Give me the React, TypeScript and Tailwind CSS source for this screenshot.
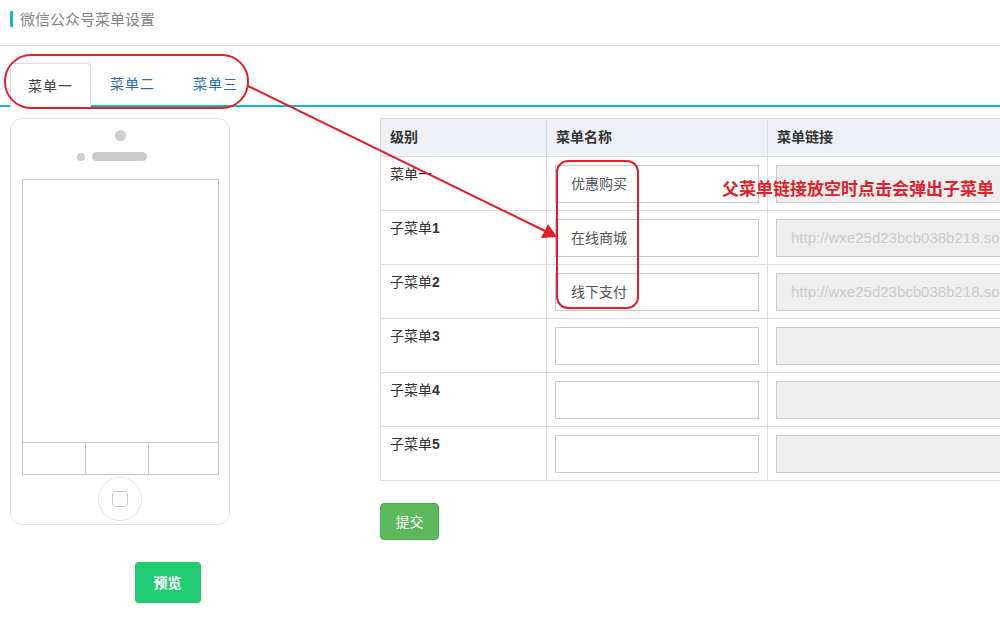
import React from "react";

const font = { fontFamily: '"Noto Sans CJK SC", "Liberation Sans", sans-serif' };

function Label({ text, num }: { text: string; num?: string }) {
  return (
    <span className="text-[14px] text-[#333]">
      {text}
      {num && <b className="font-bold" style={{ fontFamily: '"Liberation Sans", sans-serif' }}>{num}</b>}
    </span>
  );
}

const rows: { label: string; num?: string; name: string; link: string }[] = [
  { label: "菜单一", name: "优惠购买", link: "" },
  { label: "子菜单", num: "1", name: "在线商城", link: "http://wxe25d23bcb038b218.sohu" },
  { label: "子菜单", num: "2", name: "线下支付", link: "http://wxe25d23bcb038b218.sohu" },
  { label: "子菜单", num: "3", name: "", link: "" },
  { label: "子菜单", num: "4", name: "", link: "" },
  { label: "子菜单", num: "5", name: "", link: "" },
];

export default function App() {
  return (
    <div className="relative w-[1000px] h-[640px] overflow-hidden bg-white" style={font}>
      {/* header */}
      <div className="h-[46px] border-b border-[#e5e5e5] flex items-start pt-[10px] pl-[10px]">
        <div className="w-[3px] h-[16px] mt-[1px] bg-[#1ab3c4] mr-[7px]" />
        <span className="text-[15px] leading-[18px] text-[#888]">微信公众号菜单设置</span>
      </div>

      {/* tabs */}
      <div className="mt-[16px] flex items-end pl-[10px] border-b-2 border-[#17b6c6] h-[45px]">
        <div className="w-[81px] h-[44px] -mb-[2px] border border-[#ddd] border-b-0 rounded-t-[4px] bg-white flex items-center justify-center text-[14px] text-[#444] tracking-[1px]">
          菜单一
        </div>
        <div className="w-[83px] h-[44px] flex items-center justify-center text-[14px] text-[#2a6fb0] tracking-[1px]">
          菜单二
        </div>
        <div className="w-[83px] h-[44px] flex items-center justify-center text-[14px] text-[#2a6fb0] tracking-[1px]">
          菜单三
        </div>
      </div>

      {/* content */}
      <div className="flex mt-[11px] pl-[10px]">
        {/* phone column */}
        <div className="w-[220px] flex flex-col items-center">
          <div className="w-[220px] h-[407px] border border-[#e6e6e6] rounded-[12px] flex flex-col items-center">
            <div className="mt-[11px] w-[11px] h-[11px] rounded-full bg-[#ccc]" />
            <div className="mt-[11px] flex items-center gap-[7px] -ml-[17px]">
              <div className="w-[8px] h-[8px] rounded-full bg-[#ccc]" />
              <div className="w-[55px] h-[9px] rounded-full bg-[#ccc]" />
            </div>
            <div className="mt-[18px] w-[197px] h-[296px] border border-[#c8c8c8] flex flex-col">
              <div className="flex-1" />
              <div className="h-[32px] border-t border-[#c8c8c8] flex">
                <div className="w-[63px] border-r border-[#c8c8c8]" />
                <div className="w-[63px] border-r border-[#c8c8c8]" />
                <div className="flex-1" />
              </div>
            </div>
            <div className="mt-[2px] w-[44px] h-[44px] rounded-full border border-[#e6e6e6] flex items-center justify-center">
              <div className="w-[16px] h-[16px] rounded-[4px] border border-[#ccc]" />
            </div>
          </div>
          <div className="mt-[37px] ml-[95px] w-[66px] h-[41px] rounded-[4px] bg-[#21cc72] text-white text-[14px] font-bold flex items-center justify-center">
            预览
          </div>
        </div>

        {/* table column */}
        <div className="ml-[150px] flex flex-col">
          <table className="border-collapse w-[700px] table-fixed">
            <colgroup>
              <col className="w-[166px]" />
              <col className="w-[221px]" />
              <col />
            </colgroup>
            <thead>
              <tr className="h-[38px] bg-[#eef1f6]">
                <th className="border border-[#ddd] text-left pl-[9px] pb-[2px] text-[14px] font-bold text-[#333]">级别</th>
                <th className="border border-[#ddd] text-left pl-[9px] pb-[2px] text-[14px] font-bold text-[#333]">菜单名称</th>
                <th className="border border-[#ddd] text-left pl-[9px] pb-[2px] text-[14px] font-bold text-[#333]">菜单链接</th>
              </tr>
            </thead>
            <tbody>
              {rows.map((r, i) => (
                <tr key={i} className="h-[54px]">
                  <td className="border border-[#ddd] align-top pl-[9px] pt-[3px]">
                    <Label text={r.label} num={r.num} />
                  </td>
                  <td className="border border-[#ddd] align-top px-[8px] pt-[8px]">
                    <div className="h-[38px] w-[204px] border border-[#ccc] flex items-center pl-[15px] pb-[2px] text-[14px] text-[#555]">
                      {r.name}
                    </div>
                  </td>
                  <td className="border border-[#ddd] align-top pl-[8px] pt-[8px]">
                    <div className="h-[38px] border border-[#ccc] bg-[#eee] flex items-center pl-[14px] text-[15px] text-[#ccc] whitespace-nowrap overflow-hidden" style={{ fontFamily: '"Liberation Sans", sans-serif' }}>
                      {r.link}
                    </div>
                  </td>
                </tr>
              ))}
            </tbody>
          </table>
          <div className="mt-[22px] w-[59px] h-[37px] rounded-[4px] bg-[#5cb85c] border border-[#4cae4c] text-white text-[14px] flex items-center justify-center">
            提交
          </div>
        </div>
      </div>

      {/* annotations */}
      <div className="absolute left-[4px] top-[54px] w-[245px] h-[55px] rounded-[27px] border-2 border-[#e0202a]" />
      <div className="absolute left-[556px] top-[160px] w-[83px] h-[149px] rounded-[12px] border-2 border-[#e0202a]" />
      <svg className="absolute left-0 top-0 pointer-events-none" width="1000" height="640">
        <line x1="248" y1="86" x2="545" y2="231" stroke="#e0202a" strokeWidth="2" />
        <polygon points="557,237 541,238 548,224" fill="#e0202a" />
      </svg>
      <div className="absolute left-[722px] top-[175px] text-[17px] font-bold text-[#e0202a] whitespace-nowrap">
        父菜单链接放空时点击会弹出子菜单
      </div>
    </div>
  );
}
